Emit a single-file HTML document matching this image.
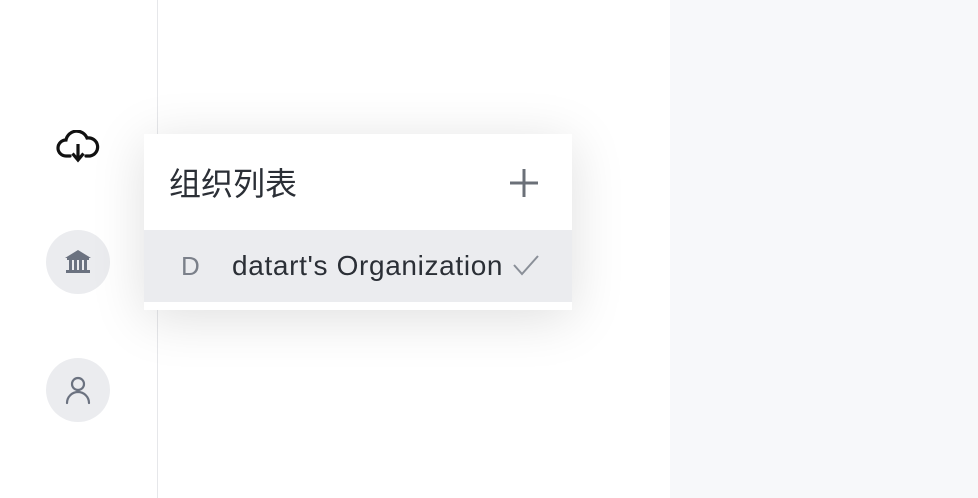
<!DOCTYPE html>
<html><head><style>
body{margin:0;width:978px;height:498px;background:#fff;position:relative;overflow:hidden;font-family:"Liberation Sans","Noto Sans CJK SC",sans-serif}
.sep{position:absolute;left:157px;top:0;width:1px;height:498px;background:#e6e7ea}
.right{position:absolute;left:670px;top:0;width:308px;height:498px;background:#f7f8fa}
.circ{position:absolute;left:46px;width:64px;height:64px;border-radius:50%;background:#ebecef}
.pop{position:absolute;left:144px;top:134px;width:428px;height:176px;background:#fff;box-shadow:0 8px 50px rgba(0,0,0,.13)}
.title{position:absolute;left:25px;top:25px;font-size:32px;color:#2b2f36}
.row{position:absolute;left:0;top:96px;width:428px;height:72px;background:#ebecef}
.d{position:absolute;left:37px;top:21px;font-size:26px;color:#7b808a}
.name{position:absolute;left:88px;top:20px;font-size:28px;letter-spacing:0.65px;color:#2b2f36;white-space:nowrap}
</style></head><body>
<div class="right"></div>
<div class="sep"></div>
<svg style="position:absolute;left:56px;top:130px" width="44" height="34" viewBox="0 0 44 34"><path d="M14 26H10a8 8 0 0 1 0-16 11 11 0 0 1 21-2 8 8 0 0 1 3 18h-4" fill="none" stroke="#111" stroke-width="3.2" stroke-linecap="round"/><path d="M22 14v15M16.5 23.5 22 30l5.5-6.5" fill="none" stroke="#111" stroke-width="3.2"/></svg>
<div class="circ" style="top:230px"></div>
<svg style="position:absolute;left:64px;top:249px" width="28" height="26" viewBox="0 0 28 26"><path d="M14 1 1 9h26z" fill="#6b7280"/><rect x="3" y="9" width="22" height="2" fill="#6b7280"/><rect x="5" y="11" width="3" height="10" fill="#6b7280"/><rect x="10" y="11" width="3" height="10" fill="#6b7280"/><rect x="15" y="11" width="3" height="10" fill="#6b7280"/><rect x="20" y="11" width="3" height="10" fill="#6b7280"/><rect x="2" y="21" width="24" height="3" fill="#6b7280"/></svg>
<div class="circ" style="top:358px"></div>
<svg style="position:absolute;left:64px;top:375px" width="28" height="30" viewBox="0 0 28 30"><circle cx="14" cy="9" r="6" fill="none" stroke="#6b7280" stroke-width="2.2"/><path d="M3 28a11 11 0 0 1 22 0" fill="none" stroke="#6b7280" stroke-width="2.2" stroke-linecap="round"/></svg>
<div class="pop">
<div class="title">组织列表</div>
<svg style="position:absolute;left:365px;top:34px" width="30" height="30"><path d="M15 1v28M1 15h28" stroke="#6b7078" stroke-width="3"/></svg>
<div class="row"><div class="d">D</div><div class="name">datart's Organization</div>
<svg style="position:absolute;left:369px;top:24px" width="26" height="22"><path d="M1 11l8 9L25 2" fill="none" stroke="#8a8f98" stroke-width="2"/></svg></div>
</div>
</body></html>
